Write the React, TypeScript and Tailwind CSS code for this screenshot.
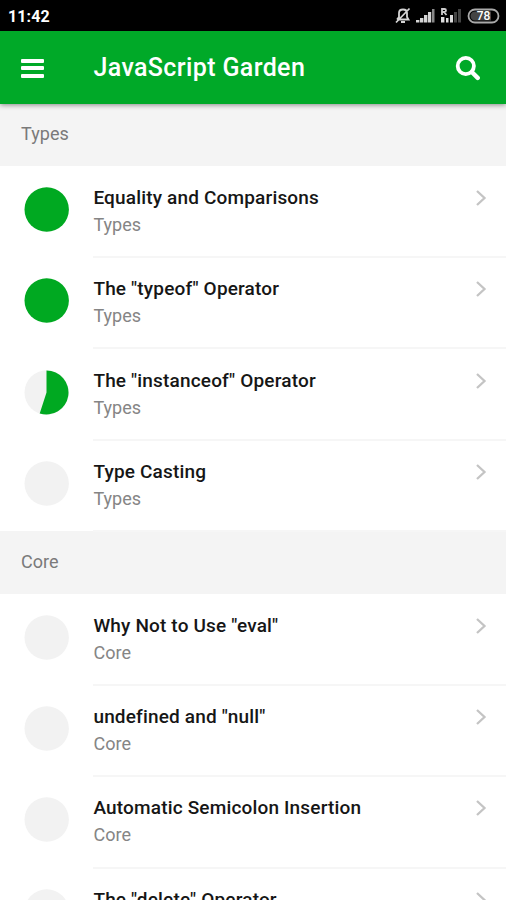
type Entry = { title: string; progress: number };
type Group = { name: string; entries: Entry[] };

const groups: Group[] = [
  {
    name: 'Types',
    entries: [
      { title: 'Equality and Comparisons', progress: 1 },
      { title: 'The "typeof" Operator', progress: 1 },
      { title: 'The "instanceof" Operator', progress: 0.55 },
      { title: 'Type Casting', progress: 0 },
    ],
  },
  {
    name: 'Core',
    entries: [
      { title: 'Why Not to Use "eval"', progress: 0 },
      { title: 'undefined and "null"', progress: 0 },
      { title: 'Automatic Semicolon Insertion', progress: 0 },
      { title: 'The "delete" Operator', progress: 0 },
    ],
  },
];

function Pie({ value }: { value: number }) {
  const angle = value * Math.PI * 2;
  const x = 22.5 + 22 * Math.sin(angle);
  const y = 22.5 - 22 * Math.cos(angle);
  return (
    <svg width="45" height="45" viewBox="0 0 45 45" className="mt-[21px] ml-[24.4px] shrink-0">
      <circle cx="22.7" cy="22.5" r="22.2" fill={value === 1 ? '#00a921' : '#f2f2f2'} />
      {value > 0 && value < 1 && (
        <path d={`M22.5 22.5V0.5A22 22 0 ${value > 0.5 ? 1 : 0} 1 ${x} ${y}Z`} fill="#00a921" />
      )}
    </svg>
  );
}

function Row({ entry, group }: { entry: Entry; group: string }) {
  return (
    <li className="flex h-[91.4px]">
      <Pie value={entry.progress} />
      <div className="mb-[-0.8px] ml-[24px] flex min-w-0 flex-1 border-b-2 border-[#f6f6f6]">
        <div className="flex-1 pt-[18px] whitespace-nowrap">
          <h2 className="text-[19px] leading-[28px] font-medium tracking-[0.17px] text-[#161616]">{entry.title}</h2>
          <p className="text-[18px] leading-[26px] tracking-[0.05px] text-[#858585]">{group}</p>
        </div>
        <svg width="12" height="18" viewBox="0 0 12 18" fill="none" className="mt-[23px] mr-[19px]">
          <path d="M2 2L9.5 9L2 16" stroke="#c4c4c4" strokeWidth="2.3" />
        </svg>
      </div>
    </li>
  );
}

function StatusBar() {
  return (
    <div className="flex h-[31px] items-center justify-between bg-black pr-[6px] pl-[8px] text-white">
      <span className="pt-[2px] text-[16px] font-bold tracking-[0.1px]">11:42</span>
      <svg width="108" height="31" viewBox="392 0 108 31" fill="none">
        <path d="M397 19.5H408.5L407 17V13Q407 9.5 403 9.5Q399 9.5 399 13V17L397 19.5M401 22H405M396 22.5L409.5 8.5" stroke="#d4d4d4" strokeWidth="1.8" />
        <path d="M416 20h3.4v2.5h-3.4zM420 18h3.4v4.5h-3.4zM424 15h3.4v7.5h-3.4zM428 12h3.2v10.5h-3.2z" fill="#d4d4d4" />
        <path d="M432 9h2.5v13.5h-2.5z" fill="#888" />
        <path d="M442 15V9H444.5Q446 9 446 10.5T444.5 12H442M444 12L446.5 15" stroke="#ccc" strokeWidth="1.8" />
        <path d="M441 17h3.4v5.5h-3.4zM446 18h2.5v4.5h-2.5zM450 15h3v7.5h-3z" fill="#ddd" />
        <path d="M454 12h3v10.5h-3zM458 9h3v13.5h-3z" fill="#444" />
        <rect x="468.5" y="9.5" width="30" height="13" rx="6.5" stroke="#aaa" strokeWidth="1.8" />
        <path d="M475 11.5H491V20.5H475A4.5 4.5 0 0 1 475 11.5Z" fill="#444" />
        <text x="483.5" y="20.3" textAnchor="middle" fill="white" fontSize="12" fontWeight="500">78</text>
      </svg>
    </div>
  );
}

export default function App() {
  return (
    <main className="h-[900px] w-[506px] overflow-hidden bg-white font-['Roboto',sans-serif]">
      <StatusBar />
      <header className="relative flex h-[72.6px] items-center bg-[#00a928] text-white shadow-[0_1px_5px_rgba(0,0,0,0.45)]">
        <button aria-label="Menu" className="mt-[2px] ml-[21px] flex w-[22.5px] flex-col gap-[3.5px]">
          <span className="h-[4px] rounded-[1px] bg-white" />
          <span className="h-[4px] rounded-[1px] bg-white" />
          <span className="h-[4px] rounded-[1px] bg-white" />
        </button>
        <h1 className="mt-[2px] ml-[50px] flex-1 text-[25px] leading-[30px] font-medium tracking-[0.37px] whitespace-nowrap">JavaScript Garden</h1>
        <button aria-label="Search" className="mt-[2px] mr-[25px]">
          <svg width="26" height="26" viewBox="0 0 26 26" fill="none" stroke="white">
            <circle cx="10.8" cy="11" r="8.1" strokeWidth="3.8" />
            <path d="M16.8 17L22.7 22.9" strokeWidth="4.4" strokeLinecap="round" />
          </svg>
        </button>
      </header>
      {groups.map((group) => (
        <section key={group.name}>
          <div className="flex h-[62.2px] items-center bg-[#f4f4f4] pb-[2.4px] pl-[21px] text-[18px] tracking-[0.05px] text-[#7a7a7a]">{group.name}</div>
          <ul>
            {group.entries.map((entry) => (
              <Row key={entry.title} entry={entry} group={group.name} />
            ))}
          </ul>
        </section>
      ))}
    </main>
  );
}
